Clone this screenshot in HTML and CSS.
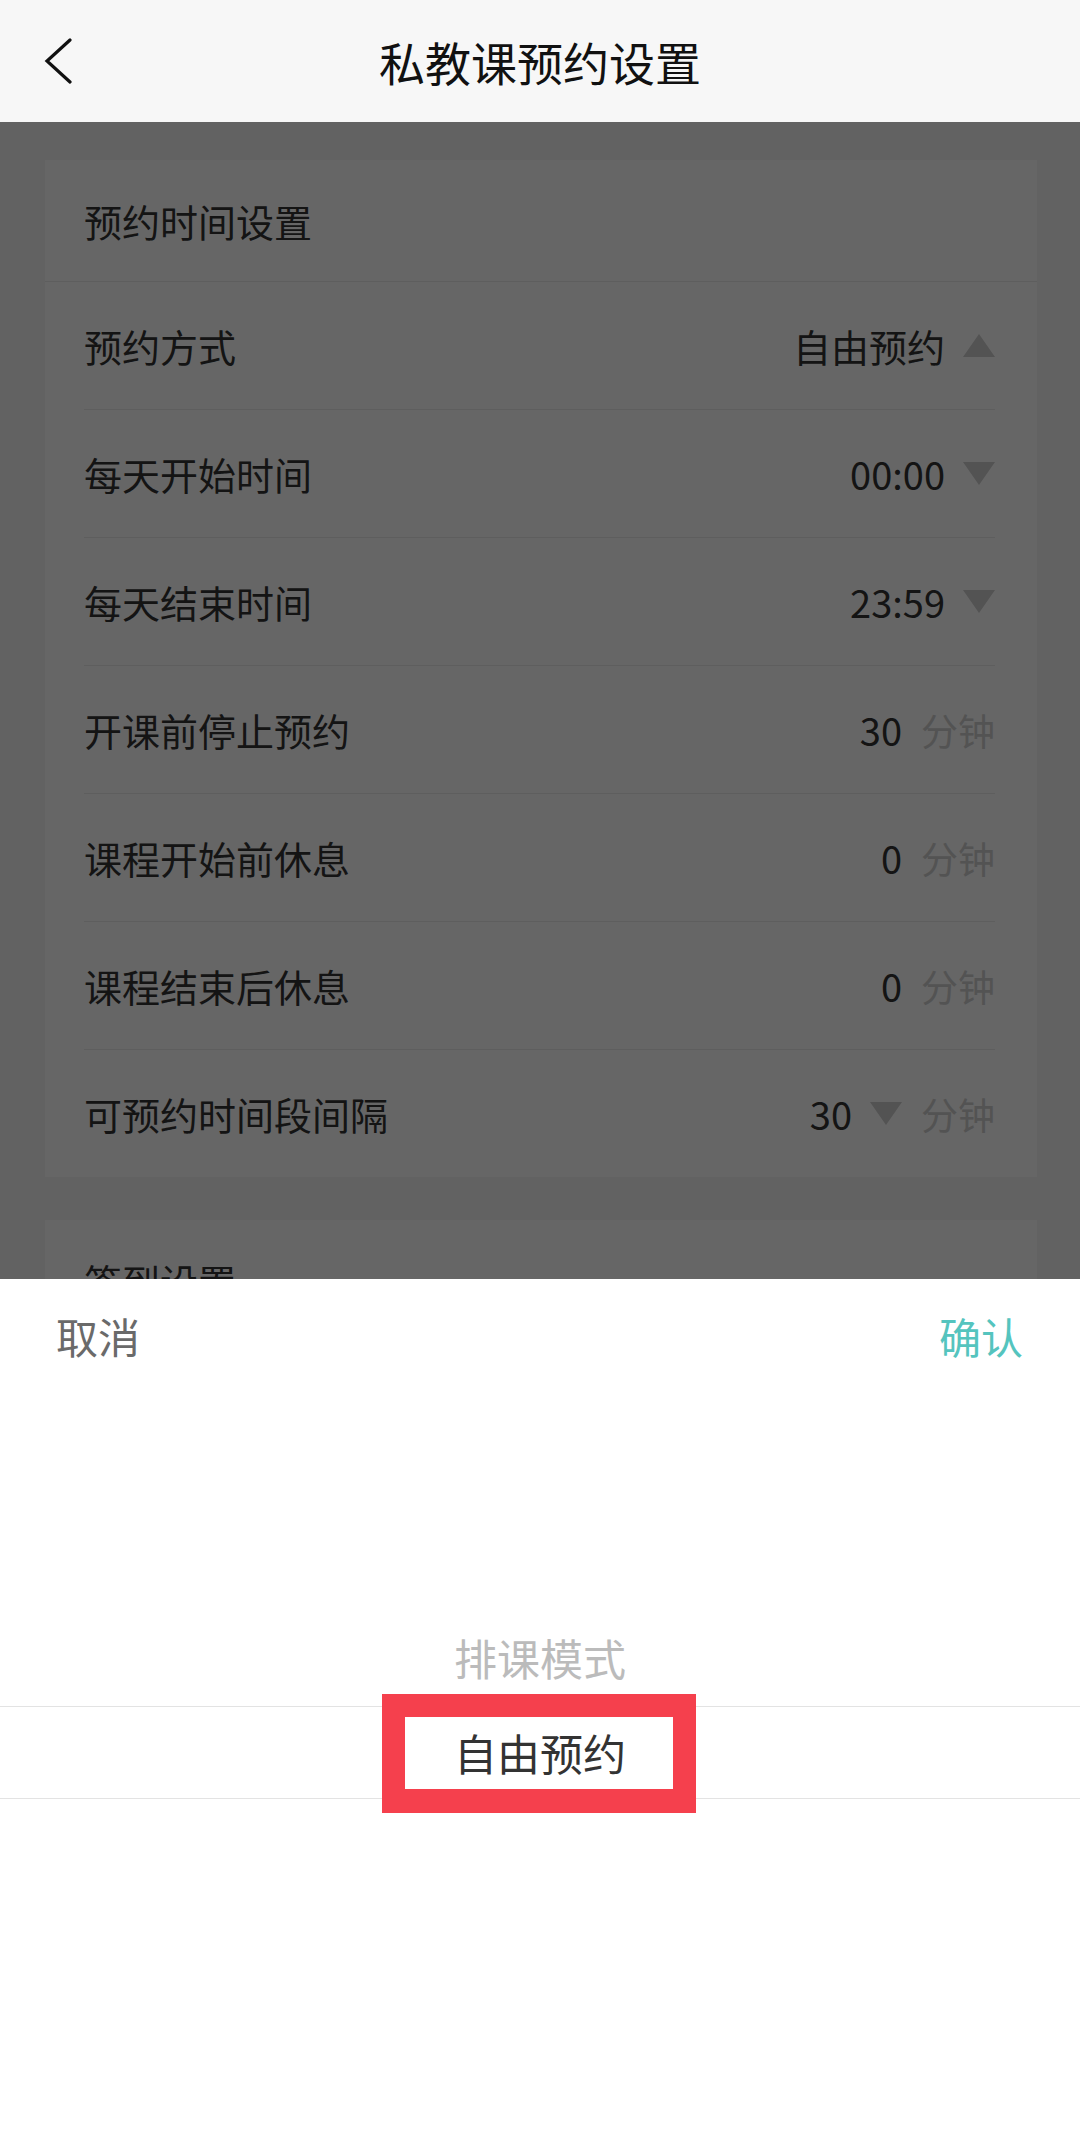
FILE: index.html
```html
<!DOCTYPE html>
<html lang="zh-CN">
<head>
<meta charset="utf-8">
<title>私教课预约设置</title>
<link rel="stylesheet" href="styles.css">
</head>
<body>
<div class="page">
  <header class="topbar">
    <span class="back"><svg width="28" height="48" viewBox="0 0 28 48"><path d="M26 3 L3 24 L26 45" fill="none" stroke="#111" stroke-width="3.2" stroke-linecap="round" stroke-linejoin="miter"/></svg></span>
    <h1 class="title">私教课预约设置</h1>
    <span class="spacer"></span>
  </header>

  <main class="content">
    <section class="card">
      <div class="card-head">预约时间设置</div>
      <div class="card-body">
        <div class="row"><span class="label">预约方式</span><span class="value">自由预约<i class="tri up"></i></span></div>
        <div class="row"><span class="label">每天开始时间</span><span class="value">00:00<i class="tri down"></i></span></div>
        <div class="row"><span class="label">每天结束时间</span><span class="value">23:59<i class="tri down"></i></span></div>
        <div class="row"><span class="label">开课前停止预约</span><span class="value">30<span class="unit">分钟</span></span></div>
        <div class="row"><span class="label">课程开始前休息</span><span class="value">0<span class="unit">分钟</span></span></div>
        <div class="row"><span class="label">课程结束后休息</span><span class="value">0<span class="unit">分钟</span></span></div>
        <div class="row"><span class="label">可预约时间段间隔</span><span class="value">30<i class="tri down"></i><span class="unit unit-tight">分钟</span></span></div>
      </div>
    </section>
    <section class="card">
      <div class="card-head">签到设置</div>
      <div class="card-body">
        <div class="row"><span class="label">签到方式</span><span class="value">扫码签到</span></div>
      </div>
    </section>
  </main>

  <div class="mask"></div>

  <div class="sheet">
    <div class="sheet-bar"><span class="cancel">取消</span><span class="ok">确认</span></div>
    <div class="picker">
      <div class="opt">排课模式</div>
      <div class="opt selected"><span class="mark"></span><span class="opt-text">自由预约</span></div>
    </div>
  </div>
</div>
</body>
</html>
```
FILE: styles.css
```css
* { box-sizing: border-box; }
html, body { margin: 0; padding: 0; }
body {
  font-family: "Noto Sans CJK SC", "Noto Sans", sans-serif;
  background: #f5f5f5;
  color: #333;
}
.page {
  position: relative;
  width: 1080px;
  height: 2147px;
  overflow: hidden;
  background: #f5f5f5;
}
.topbar {
  height: 122px;
  background: #f7f7f7;
  display: grid;
  grid-template-columns: 1fr auto 1fr;
  align-items: center;
}
.back {
  padding-left: 44px;
  display: flex;
  align-items: center;
}
.title {
  margin: 0;
  font-size: 46px;
  font-weight: 400;
  color: #111;
  line-height: 122px;
}
.content {
  padding-top: 38px;
  display: flex;
  flex-direction: column;
  gap: 43px;
}
.card {
  background: #fff;
  margin: 0 43px 0 45px;
}
.card-head {
  height: 122px;
  line-height: 121px;
  padding-left: 39px;
  font-size: 38px;
  color: #333;
  border-bottom: 1px solid #ececec;
}
.card-body {
  padding: 0 42px 0 39px;
}
.row {
  height: 128px;
  display: flex;
  align-items: center;
  justify-content: space-between;
  border-bottom: 1px solid #ececec;
  font-size: 38px;
}
.row:last-child { border-bottom: none; height: 127px; }
.label { color: #333; }
.value {
  display: flex;
  align-items: center;
  color: #333;
}
.tri {
  display: inline-block;
  width: 0;
  height: 0;
  margin-left: 18px;
  border-left: 16px solid transparent;
  border-right: 16px solid transparent;
}
.tri.down { border-top: 23px solid #cfcfcf; }
.tri.up { border-bottom: 23px solid #cfcfcf; }
.unit {
  margin-left: 19px;
  font-size: 37px;
  color: #cfcfcf;
}
.mask {
  position: absolute;
  top: 122px;
  left: 0;
  right: 0;
  bottom: 0;
  background: rgba(0, 0, 0, 0.6);
}
.sheet {
  position: absolute;
  left: 0;
  right: 0;
  bottom: 0;
  height: 868px;
  background: #fff;
}
.sheet-bar {
  height: 112px;
  padding: 0 57px 0 56px;
  display: flex;
  align-items: center;
  justify-content: space-between;
  font-size: 42px;
}
.cancel { color: #6a6a6a; }
.ok { color: #55c4be; }
.picker {
  padding-top: 225px;
}
.opt {
  height: 90px;
  line-height: 82px;
  text-align: center;
  font-size: 43px;
  color: #bbb;
}
.opt.selected {
  position: relative;
  height: 93px;
  line-height: 91px;
  color: #333;
  border-top: 1px solid #e3e3e3;
  border-bottom: 1px solid #e3e3e3;
}
.mark {
  position: absolute;
  left: 382px;
  top: -13px;
  width: 314px;
  height: 119px;
  border: 23px solid #f5404d;
  border-bottom-width: 24px;
  background: #fff;
}
.opt-text {
  position: relative;
  z-index: 1;
}
```
